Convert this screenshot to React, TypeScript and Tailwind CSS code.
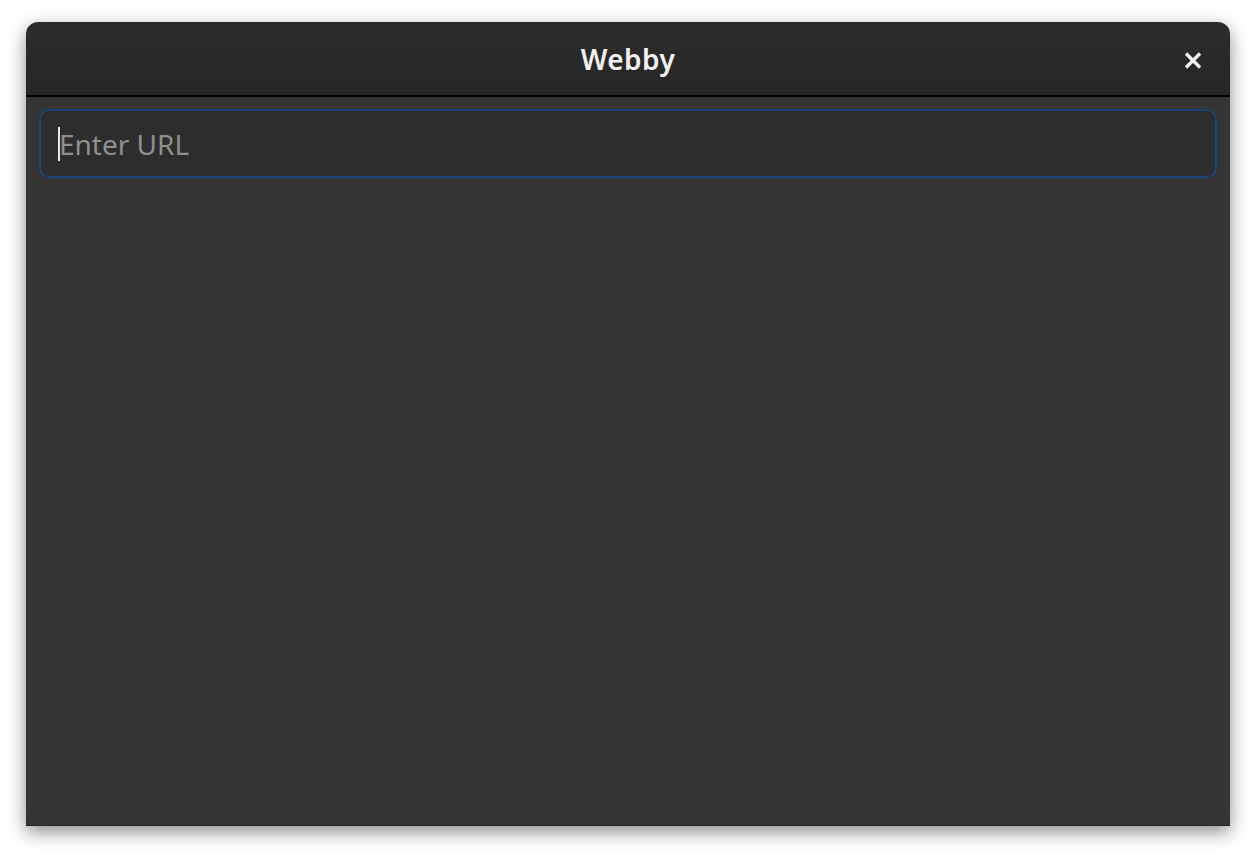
export default function App() {
  return (
    <div className="w-full h-[858px] bg-white pt-[22px] pl-[26px]" style={{ fontFamily: '"Noto Sans", "Open Sans", sans-serif' }}>
      <div className="w-[1204px] h-[804px] flex flex-col rounded-t-[12px] overflow-hidden shadow-[0_6px_18px_rgba(0,0,0,0.45)] border-b border-[#262626]">
        {/* Header bar */}
        <div className="relative h-[75px] shrink-0 flex items-center justify-center bg-gradient-to-b from-[#2c2c2c] to-[#262626] border-b-2 border-black">
          <span className="text-[28px] font-semibold text-[#f0f0f0] tracking-[0.4px]">Webby</span>
          <button className="absolute right-[28px] top-[30px] w-[18px] h-[17px] flex items-center justify-center">
            <svg width="18" height="17" viewBox="0 0 18 17">
              <path d="M2 1.5 L16 15.5 M16 1.5 L2 15.5" stroke="#f2f2f2" strokeWidth="3.4" strokeLinecap="butt" />
            </svg>
          </button>
        </div>

        {/* Body */}
        <div className="flex-1 bg-[#353535] px-[13px] pt-[12px]">
          <div className="h-[69px] rounded-[10px] border-[2.5px] border-[#1d4476] bg-[#2d2d2d] flex items-center pl-[17px]">
            <span className="w-[2px] h-[34px] bg-[#e8e8e8] mr-[-1px]" />
            <span className="text-[28px] text-[#8f8f8f] leading-none">Enter URL</span>
          </div>
        </div>
      </div>
    </div>
  )
}
